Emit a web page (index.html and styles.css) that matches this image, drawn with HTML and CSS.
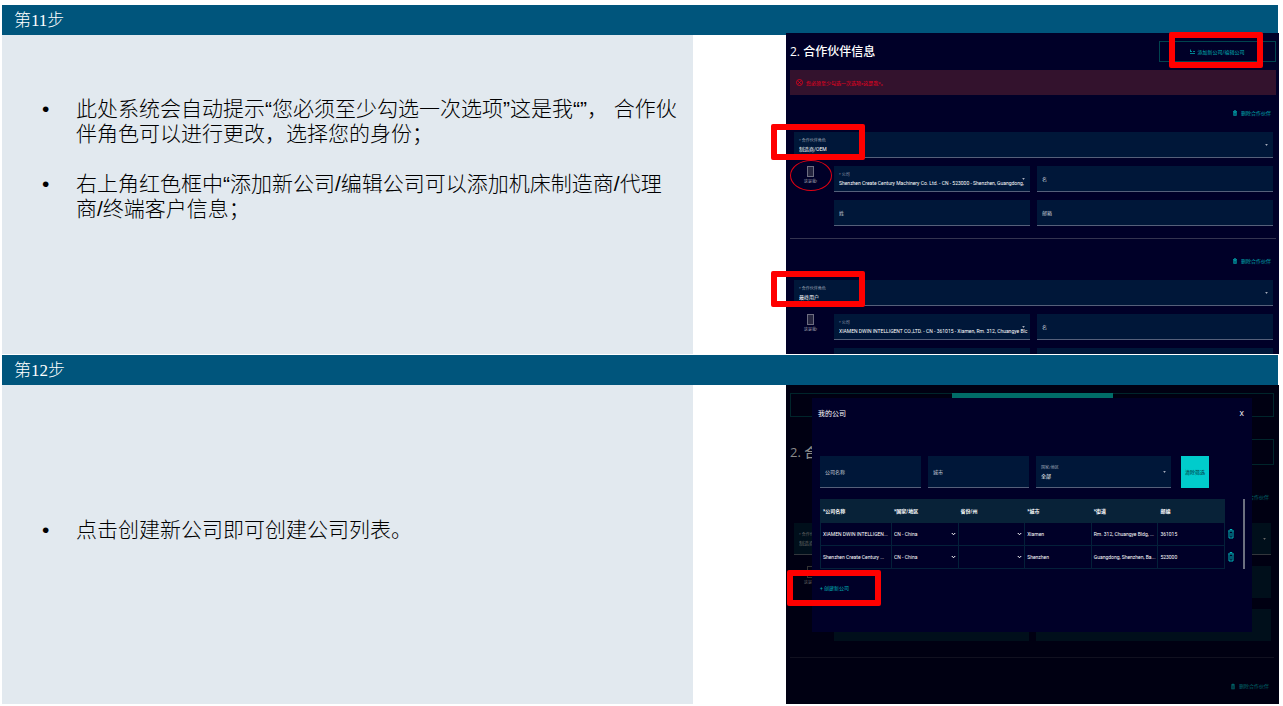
FILE: index.html
```html
<!DOCTYPE html>
<html lang="zh-CN">
<head>
    <meta charset="UTF-8">
    <meta name="viewport" content="width=device-width, initial-scale=1.0">
    <title>操作步骤</title>
    <link rel="stylesheet" href="styles.css">
</head>
<body>
    <svg width="0" height="0" class="sprite">
        <symbol id="trash" viewBox="0 0 10 14">
            <path d="M0 2h10v1.600H0zM3 0h4v2H3zM1 4.500h8V14H1zM3.200 6v6.400h1V6zM5.800 6v6.400h1V6z" fill="currentColor" fill-rule="evenodd"/>
        </symbol>
        <symbol id="bin" viewBox="0 0 12 20">
            <path d="M0 4h12M4 3V1h4v2M2 5v13h8V5M6 8v7" fill="none" stroke="currentColor" stroke-width="2"/>
        </symbol>
        <symbol id="chevron" viewBox="0 0 10 8">
            <path d="M1.500 2l3.500 3.500L8.500 2" fill="none" stroke="currentColor" stroke-width="2"/>
        </symbol>
        <symbol id="caret" viewBox="0 0 8 6">
            <path d="M0 0h8L4 6z" fill="currentColor"/>
        </symbol>
    </svg>

    <section class="step">
        <h2 class="step-title">第11步</h2>
        <div class="step-body">
            <div class="notes">
                <ul>
                    <li>此处系统会自动提示“您必须至少勾选一次选项”这是我“”， 合作伙伴角色可以进行更改，选择您的身份；</li>
                    <li>右上角红色框中“添加新公司/编辑公司可以添加机床制造商/代理商/终端客户信息；</li>
                </ul>
            </div>
            <div class="shot shot-tall">
                <div class="screen">
                    <div class="form-head">
                        <h3>2. 合作伙伴信息</h3>
                        <button class="outline">
                            <svg width="5" height="5" viewBox="0 0 10 10"><path d="M0 9h10M0 5h4M6 5h4M1 1v4" stroke="currentColor" stroke-width="1.500" fill="none"/></svg>
                            添加新公司/编辑公司
                        </button>
                    </div>
                    <div class="alert">
                        <svg width="7" height="7" viewBox="0 0 14 14"><circle cx="7" cy="7" r="6" fill="none" stroke="currentColor" stroke-width="1.600"/><path d="M4.500 4.500l5 5M9.500 4.500l-5 5" stroke="currentColor" stroke-width="1.600"/></svg>
                        您必须至少勾选一次选项«这是我»。
                    </div>
                    <div class="partner">
                        <button class="delete"><svg width="4" height="6"><use href="#trash"/></svg>删除合作伙伴</button>
                        <label class="field">
                            <span>* 合作伙伴角色</span>
                            <select><option>制造商/OEM</option></select>
                            <svg class="caret" width="3" height="2"><use href="#caret"/></svg>
                        </label>
                        <div class="row">
                            <label class="me"><input type="checkbox">这是我!</label>
                            <label class="field">
                                <span>* 公司</span>
                                <select><option>Shenzhen Create Century Machinery Co. Ltd. - CN - 523000 - Shenzhen, Guangdong,</option></select>
                                <svg class="caret" width="3" height="2"><use href="#caret"/></svg>
                            </label>
                            <label class="field"><input type="text" placeholder="名" aria-label="名"></label>
                        </div>
                        <div class="row">
                            <i></i>
                            <label class="field"><input type="text" placeholder="姓" aria-label="姓"></label>
                            <label class="field"><input type="text" placeholder="邮箱" aria-label="邮箱"></label>
                        </div>
                    </div>
                    <hr>
                    <div class="partner">
                        <button class="delete"><svg width="4" height="6"><use href="#trash"/></svg>删除合作伙伴</button>
                        <label class="field">
                            <span>* 合作伙伴角色</span>
                            <select><option>最终用户</option></select>
                            <svg class="caret" width="3" height="2"><use href="#caret"/></svg>
                        </label>
                        <div class="row">
                            <label class="me"><input type="checkbox">这是我!</label>
                            <label class="field">
                                <span>* 公司</span>
                                <select><option>XIAMEN DWIN INTELLIGENT CO.,LTD. - CN - 361015 - Xiamen, Rm. 312, Chuangye Blc</option></select>
                                <svg class="caret" width="3" height="2"><use href="#caret"/></svg>
                            </label>
                            <label class="field"><input type="text" placeholder="名" aria-label="名"></label>
                        </div>
                        <div class="row">
                            <i></i>
                            <div class="field"></div>
                            <div class="field"></div>
                        </div>
                    </div>
                </div>
                <div class="mark mark-add"></div>
                <div class="mark mark-role"></div>
                <div class="mark mark-role2"></div>
                <div class="mark-circle"></div>
            </div>
        </div>
    </section>

    <section class="step">
        <h2 class="step-title">第12步</h2>
        <div class="step-body">
            <div class="notes notes-low">
                <ul>
                    <li>点击创建新公司即可创建公司列表。</li>
                </ul>
            </div>
            <div class="shot">
                <div class="screen screen-dim">
                    <div class="backdrop-box"></div>
                    <div class="form-head">
                        <h3>2. 合</h3>
                        <div class="outline"></div>
                    </div>
                    <div class="partner">
                        <button class="delete">删除合作伙伴</button>
                        <label class="field">
                            <span>* 合作伙伴角色</span>
                            <select><option>制造商</option></select>
                            <svg class="caret" width="3" height="2"><use href="#caret"/></svg>
                        </label>
                        <div class="row">
                            <label class="me"><input type="checkbox">这是我!</label>
                            <div class="field"></div>
                            <div class="field"></div>
                        </div>
                        <div class="row">
                            <i></i>
                            <div class="field"></div>
                            <div class="field"></div>
                        </div>
                    </div>
                    <hr>
                    <div class="partner">
                        <button class="delete"><svg width="4" height="7"><use href="#trash"/></svg>删除合作伙伴</button>
                    </div>
                    <div class="tab-bar"></div>

                    <div class="dialog">
                        <div class="dialog-head">
                            <h4>我的公司</h4>
                            <button class="close" aria-label="关闭">X</button>
                        </div>
                        <div class="filters">
                            <label class="field"><input type="text" placeholder="公司名称" aria-label="公司名称"></label>
                            <label class="field"><input type="text" placeholder="城市" aria-label="城市"></label>
                            <label class="field">
                                <span>国家/地区</span>
                                <select><option>全部</option></select>
                                <svg class="caret" width="3" height="2"><use href="#caret"/></svg>
                            </label>
                            <button class="clear">清除筛选</button>
                        </div>
                        <div class="list">
                            <table>
                                <thead>
                                    <tr><th class="name">*公司名称</th><th>*国家/地区</th><th>省份/州</th><th>*城市</th><th>*街道</th><th>邮编</th><td class="tool"></td></tr>
                                </thead>
                                <tbody>
                                    <tr>
                                        <td>XIAMEN DWIN INTELLIGEN...</td>
                                        <td><div class="pick"><select aria-label="国家/地区"><option>CN - China</option></select><svg width="5" height="4"><use href="#chevron"/></svg></div></td>
                                        <td><div class="pick"><select aria-label="省份/州"><option></option></select><svg width="5" height="4"><use href="#chevron"/></svg></div></td>
                                        <td>Xiamen</td>
                                        <td>Rm. 312, Chuangye Bldg, ...</td>
                                        <td>361015</td>
                                        <td class="tool"><button aria-label="删除"><svg width="6" height="10"><use href="#bin"/></svg></button></td>
                                    </tr>
                                    <tr>
                                        <td>Shenzhen Create Century ...</td>
                                        <td><div class="pick"><select aria-label="国家/地区"><option>CN - China</option></select><svg width="5" height="4"><use href="#chevron"/></svg></div></td>
                                        <td><div class="pick"><select aria-label="省份/州"><option></option></select><svg width="5" height="4"><use href="#chevron"/></svg></div></td>
                                        <td>Shenzhen</td>
                                        <td>Guangdong, Shenzhen, Ba...</td>
                                        <td>523000</td>
                                        <td class="tool"><button aria-label="删除"><svg width="6" height="10"><use href="#bin"/></svg></button></td>
                                    </tr>
                                </tbody>
                            </table>
                            <div class="scrollbar"></div>
                        </div>
                        <button class="create">+ 创建新公司</button>
                    </div>
                </div>
                <div class="mark mark-create"></div>
            </div>
        </div>
    </section>
</body>
</html>
```
FILE: styles.css
```css
* {
    box-sizing: border-box;
}
body {
    margin: 0;
    padding: 5px 4px 0 2px;
    background: #fff;
    font-family: "Liberation Sans", "Noto Sans CJK SC Light", "Noto Sans CJK SC", sans-serif;
}
h2, h3, h4, ul {
    margin: 0;
    padding: 0;
    font-weight: normal;
}
button, input, select {
    margin: 0;
    padding: 0;
    border: 0;
    border-radius: 0;
    background: none;
    color: inherit;
    font: inherit;
    appearance: none;
}
svg {
    flex: none;
}
.sprite {
    position: absolute;
}

/* steps */
.step {
    margin-bottom: 1px;
}
.step-title {
    height: 30px;
    margin-right: 1px;
    padding-left: 12px;
    background: #00557c;
    color: #fff;
    font-family: "Liberation Serif", "Noto Sans CJK SC", serif;
    font-size: 17px;
    font-weight: 300;
    line-height: 31px;
}
.step-body {
    display: grid;
    grid-template-columns: 691fr 493fr;
    grid-template-rows: 100%;
    column-gap: 93px;
    height: 319px;
}
.notes {
    padding: 61px 12px 0 74px;
    background: #e2e9ef;
    color: #000;
    font-size: 21px;
    font-weight: 300;
    line-height: 25px;
}
.notes-low {
    padding-top: 132px;
}
.notes ul {
    list-style: none;
}
.notes li {
    position: relative;
    margin-bottom: 25px;
}
.notes li::before {
    content: "•";
    position: absolute;
    left: -34px;
}

/* embedded screens */
.shot {
    position: relative;
    min-width: 0;
}
.shot-tall {
    margin-top: -2px;
}
.screen {
    --row: 26px;
    --gap: 8px;
    position: relative;
    height: 100%;
    padding: 8px 3px 0 4px;
    overflow: hidden;
    background: #000028;
    color: #d5d5de;
    font-family: Roboto, "Noto Sans CJK SC", sans-serif;
    font-size: 5px;
    line-height: 8px;
}
.form-head {
    display: flex;
    justify-content: space-between;
    align-items: center;
}
.form-head h3 {
    color: #fff;
    font-family: "Open Sans", "Noto Sans CJK SC", sans-serif;
    font-size: 12px;
    font-weight: 500;
    line-height: 20px;
}
.outline {
    display: flex;
    justify-content: center;
    align-items: center;
    gap: 2px;
    width: 117px;
    height: 21px;
    border: 1px solid #00444f;
    color: #00b0b4;
}
.alert {
    display: flex;
    align-items: center;
    gap: 3px;
    height: 25px;
    margin-top: 8px;
    padding-left: 6px;
    background: #33122d;
    color: #f0001c;
}
.partner {
    display: flex;
    flex-direction: column;
    gap: var(--gap);
    padding: 14px 3px 0 4px;
}
.delete {
    display: flex;
    align-self: flex-end;
    align-items: center;
    gap: 4px;
    height: 8px;
    margin: 0 2px 7px 0;
    color: #00b0b4;
}
.field {
    position: relative;
    display: flex;
    flex-direction: column;
    justify-content: center;
    min-width: 0;
    height: var(--row);
    padding: 0 2px 0 5px;
    border-bottom: 1px solid #55607a;
    background: #001739;
}
.field span {
    color: #9aa3b4;
    font-size: 4px;
    line-height: 8px;
}
.field select {
    width: 100%;
    height: 8px;
    overflow: hidden;
    color: #fff;
}
.field input {
    width: 100%;
    height: 8px;
    outline: 0;
}
.field input::placeholder {
    color: #c5cad6;
    opacity: 1;
}
.caret {
    position: absolute;
    right: 5px;
    top: calc(50% - 1px);
    color: #a5abba;
}
.row {
    display: grid;
    grid-template-columns: 33px 196fr 236fr;
    column-gap: 7px;
}
.me {
    display: flex;
    flex-direction: column;
    align-items: center;
    gap: 1px;
    color: #a5a5b5;
    font-size: 4px;
}
.me input {
    width: 7px;
    height: 11px;
    border: 1px solid #6d6d80;
    background: #25253f;
}
hr {
    height: 1px;
    margin: 12px 0 4px;
    border: 0;
    background: #343450;
}

/* dimmed page behind the dialog */
.screen-dim {
    --row: 32px;
    --gap: 11px;
    padding: 8px 5px 0 4px;
    background: #000012;
}
.backdrop-box {
    height: 24px;
    margin-bottom: 22px;
    border: 1px solid #00252b;
}
.screen-dim .form-head h3 {
    color: #8b8b8b;
    font-size: 13px;
    line-height: 26px;
}
.screen-dim .outline {
    height: 26px;
    border-color: #00252b;
}
.screen-dim .partner {
    padding-top: 28px;
}
.screen-dim .partner > .delete {
    margin-bottom: 11px;
    color: #006a6e;
}
.screen-dim .partner > .field,
.screen-dim .row .field {
    border-color: #33363c;
    background: #000f1b;
}
.screen-dim .row .field {
    border: 0;
}
.screen-dim .partner > .field select,
.screen-dim .partner > .field span,
.screen-dim .partner > .field svg,
.screen-dim .me {
    color: #666;
}
.screen-dim .me input {
    height: 12px;
    border-color: #333;
    background: none;
}
.screen-dim hr {
    margin: 16px 0 -4px;
    background: #111120;
}
.tab-bar {
    position: absolute;
    left: 166px;
    top: 8px;
    width: 161px;
    height: 5px;
    background: #006c68;
}

/* dialog */
.dialog {
    position: absolute;
    left: 26px;
    right: 27px;
    top: 13px;
    padding: 6px 7px 40px 8px;
    background: #000028;
}
.dialog-head {
    display: flex;
    justify-content: space-between;
    align-items: center;
    height: 20px;
    padding-right: 1px;
}
.dialog-head h4 {
    margin-left: -2px;
    color: #fff;
    font-size: 7px;
}
.close {
    color: #fff;
    font-size: 7px;
}
.filters {
    display: grid;
    grid-template-columns: 101fr 101fr 135fr 31px;
    column-gap: 7px;
    margin: 32px 36px 11px 0;
}
.clear {
    height: 32px;
    margin-left: 3px;
    background: #00cccc;
    color: #002a35;
}
.list {
    display: flex;
    justify-content: space-between;
}
table {
    width: 418px;
    border-collapse: collapse;
    table-layout: fixed;
}
th, td {
    height: 23px;
    padding: 0 0 0 2px;
    border: 1px solid #04203a;
    color: #fff;
    font-weight: normal;
    text-align: left;
    white-space: nowrap;
}
th {
    border-color: #082238;
    background: #082238;
    font-weight: bold;
}
.name {
    width: 71px;
}
.tool {
    width: 13px;
    padding-left: 3px;
    border: 0;
    color: #00b4b8;
}
.tool button {
    display: flex;
}
.pick {
    display: flex;
    align-items: center;
    padding-right: 2px;
}
.pick select {
    flex: 1;
    min-width: 0;
    height: 8px;
}
.scrollbar {
    width: 2px;
    background: #6c7080;
}
.create {
    display: block;
    margin-top: 15px;
    color: #00b4b8;
    line-height: 8px;
}

/* red annotations */
.mark {
    position: absolute;
    width: 94px;
    height: 36px;
    border: 6px solid #f00;
    border-radius: 2px;
}
.mark-add {
    right: 16px;
    top: -1px;
}
.mark-role {
    left: -15px;
    top: 91px;
}
.mark-role2 {
    left: -15px;
    top: 238px;
}
.mark-create {
    left: 1px;
    top: 185px;
}
.mark-circle {
    position: absolute;
    left: 4px;
    top: 127px;
    width: 42px;
    height: 31px;
    border: 1px solid #e00012;
    border-radius: 50%;
}
```
